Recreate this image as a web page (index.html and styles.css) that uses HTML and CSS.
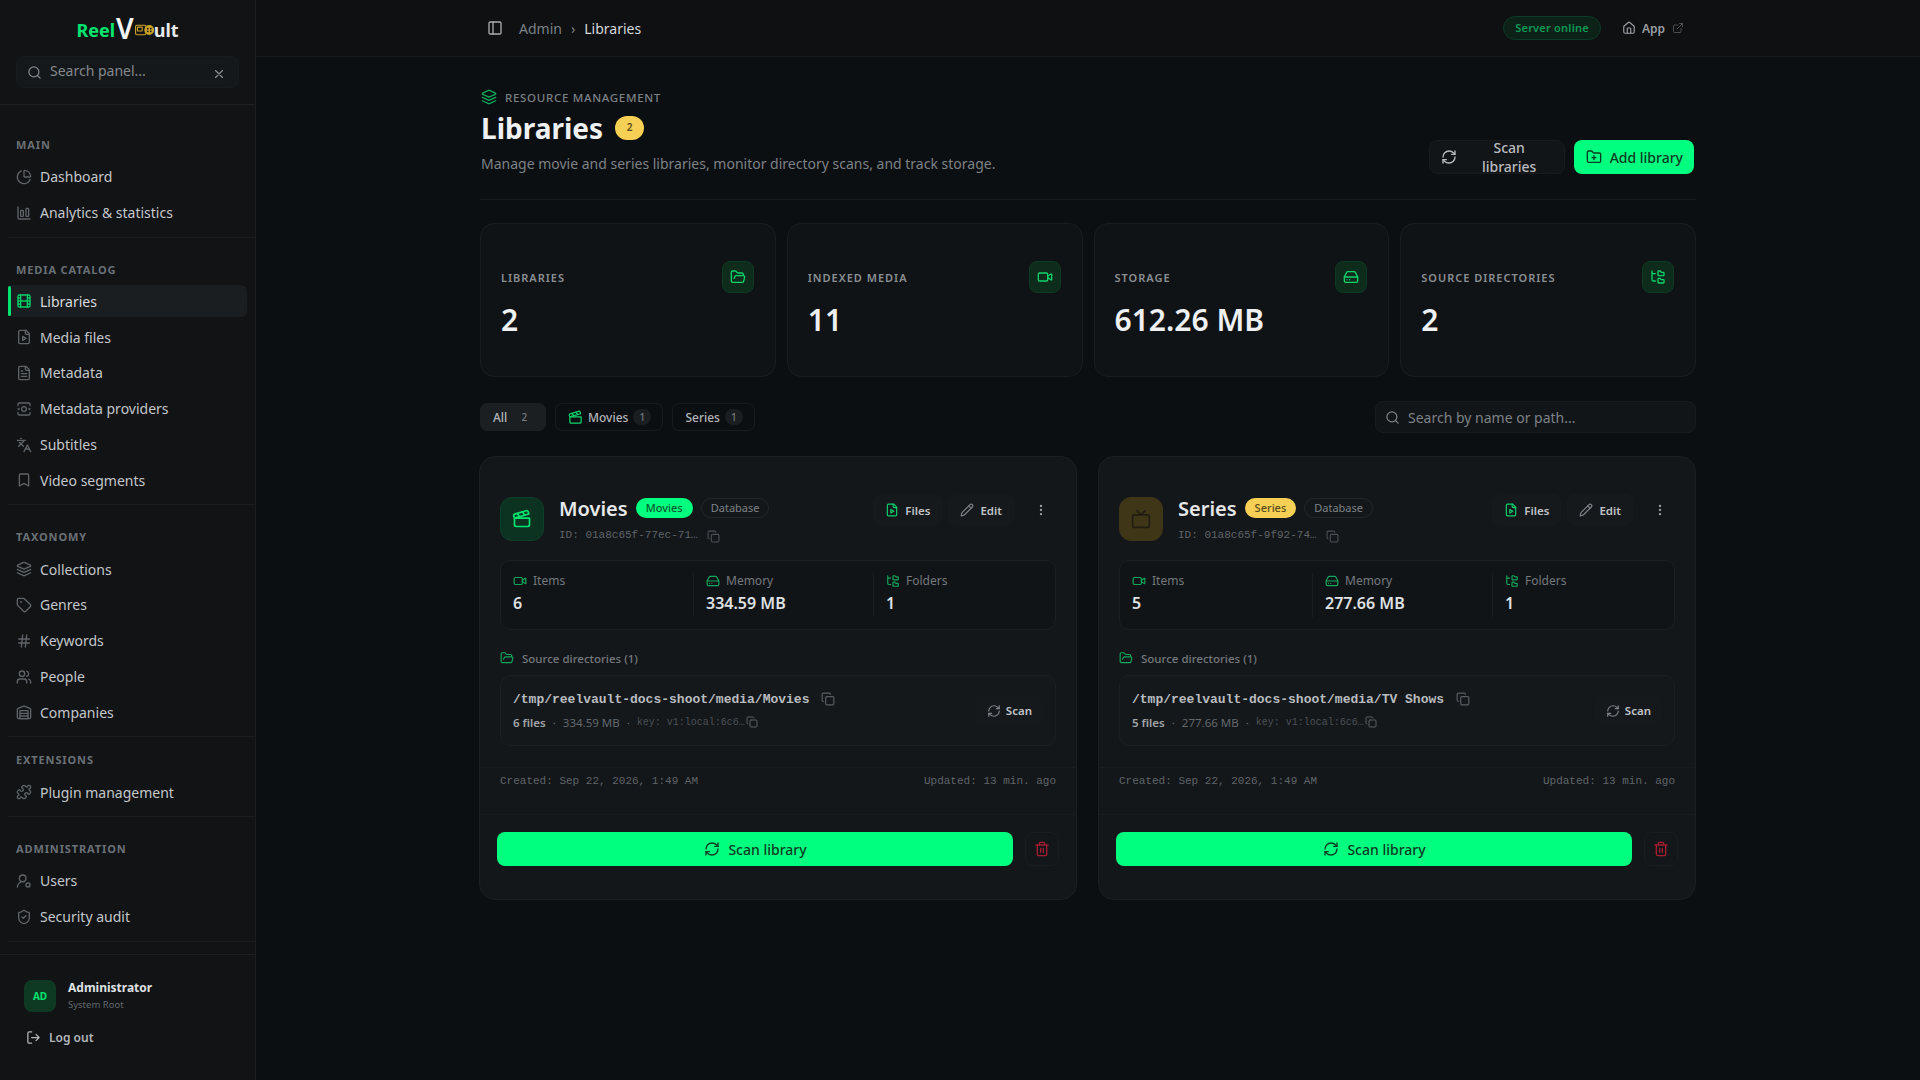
FILE: index.html
```html
<!DOCTYPE html>
<html lang="en">
<head>
<meta charset="UTF-8">
<meta name="viewport" content="width=device-width, initial-scale=1.0">
<title>Libraries - ReelVault</title>
<link rel="stylesheet" href="styles.css">
</head>
<body>
<!-- icon sprite -->
<svg class="sprite" xmlns="http://www.w3.org/2000/svg">
    <symbol id="i-search" viewBox="0 0 24 24"><circle cx="11" cy="11" r="8"/><path d="m21 21-4.3-4.3"/></symbol>
    <symbol id="i-x" viewBox="0 0 24 24"><path d="M18 6 6 18M6 6l12 12"/></symbol>
    <symbol id="i-pie" viewBox="0 0 24 24"><path d="M21 12c.552 0 1.005-.449.95-.998a10 10 0 0 0-8.953-8.951c-.55-.055-.998.398-.998.95v8a1 1 0 0 0 1 1z"/><path d="M21.21 15.89A10 10 0 1 1 8 2.83"/></symbol>
    <symbol id="i-chart" viewBox="0 0 24 24"><path d="M3 3v16a2 2 0 0 0 2 2h16"/><rect x="15" y="5" width="4" height="12" rx="1"/><rect x="7" y="8" width="4" height="9" rx="1"/></symbol>
    <symbol id="i-film" viewBox="0 0 24 24"><rect x="3" y="3" width="18" height="18" rx="2"/><path d="M7 3v18M3 7.5h4M3 12h18M3 16.5h4M17 3v18M17 7.5h4M17 16.5h4"/></symbol>
    <symbol id="i-file-play" viewBox="0 0 24 24"><path d="M15 2H6a2 2 0 0 0-2 2v16a2 2 0 0 0 2 2h12a2 2 0 0 0 2-2V7Z"/><path d="M14 2v4a2 2 0 0 0 2 2h4"/><path d="m10 11 5 3-5 3v-6z"/></symbol>
    <symbol id="i-file-text" viewBox="0 0 24 24"><path d="M15 2H6a2 2 0 0 0-2 2v16a2 2 0 0 0 2 2h12a2 2 0 0 0 2-2V7Z"/><path d="M14 2v4a2 2 0 0 0 2 2h4"/><path d="M10 9H8M16 13H8M16 17H8"/></symbol>
    <symbol id="i-scan" viewBox="0 0 24 24"><path d="M3 7V5a2 2 0 0 1 2-2h14a2 2 0 0 1 2 2v2M21 17v2a2 2 0 0 1-2 2H5a2 2 0 0 1-2-2v-2M3 12h2M19 12h2"/><circle cx="12" cy="12" r="3.5"/></symbol>
    <symbol id="i-lang" viewBox="0 0 24 24"><path d="m5 8 6 6M4 14l6-6 2-3M2 5h12M7 2h1M22 22l-5-10-5 10M14 18h6"/></symbol>
    <symbol id="i-bookmark" viewBox="0 0 24 24"><path d="m19 21-7-4-7 4V5a2 2 0 0 1 2-2h10a2 2 0 0 1 2 2v16z"/></symbol>
    <symbol id="i-layers" viewBox="0 0 24 24"><path d="m12.83 2.18a2 2 0 0 0-1.66 0L2.6 6.08a1 1 0 0 0 0 1.83l8.58 3.91a2 2 0 0 0 1.66 0l8.58-3.9a1 1 0 0 0 0-1.83Z"/><path d="m22 17.65-9.17 4.16a2 2 0 0 1-1.66 0L2 17.65"/><path d="m22 12.65-9.17 4.16a2 2 0 0 1-1.66 0L2 12.65"/></symbol>
    <symbol id="i-tag" viewBox="0 0 24 24"><path d="M12.586 2.586A2 2 0 0 0 11.172 2H4a2 2 0 0 0-2 2v7.172a2 2 0 0 0 .586 1.414l8.704 8.704a2.426 2.426 0 0 0 3.42 0l6.58-6.58a2.426 2.426 0 0 0 0-3.42z"/><circle cx="7.5" cy="7.5" r=".5"/></symbol>
    <symbol id="i-hash" viewBox="0 0 24 24"><path d="M4 9h16M4 15h16M10 3 8 21M16 3l-2 18"/></symbol>
    <symbol id="i-users" viewBox="0 0 24 24"><path d="M16 21v-2a4 4 0 0 0-4-4H6a4 4 0 0 0-4 4v2"/><circle cx="9" cy="7" r="4"/><path d="M22 21v-2a4 4 0 0 0-3-3.87M16 3.13a4 4 0 0 1 0 7.75"/></symbol>
    <symbol id="i-warehouse" viewBox="0 0 24 24"><path d="M22 8.35V20a2 2 0 0 1-2 2H4a2 2 0 0 1-2-2V8.35A2 2 0 0 1 3.26 6.5l8-3.2a2 2 0 0 1 1.48 0l8 3.2A2 2 0 0 1 22 8.35Z"/><path d="M6 18h12M6 14h12"/><rect x="6" y="10" width="12" height="12"/></symbol>
    <symbol id="i-puzzle" viewBox="0 0 24 24"><path d="M19.439 7.85c-.049.322.059.648.289.878l1.568 1.568c.47.47.706 1.087.706 1.704s-.235 1.233-.706 1.704l-1.611 1.611a.98.98 0 0 1-.837.276c-.47-.07-.802-.48-.968-.925a2.501 2.501 0 1 0-3.214 3.214c.446.166.855.497.925.968a.979.979 0 0 1-.276.837l-1.61 1.61a2.404 2.404 0 0 1-1.705.707 2.402 2.402 0 0 1-1.704-.706l-1.568-1.568a1.026 1.026 0 0 0-.877-.29c-.493.074-.84.504-1.02.968a2.5 2.5 0 1 1-3.237-3.237c.464-.18.894-.527.967-1.02a1.026 1.026 0 0 0-.289-.877l-1.568-1.568A2.402 2.402 0 0 1 1.998 12c0-.617.236-1.234.706-1.704L4.23 8.77c.24-.24.581-.353.917-.303.515.077.877.528 1.073 1.01a2.5 2.5 0 1 0 3.259-3.259c-.482-.196-.933-.558-1.01-1.073-.05-.336.062-.676.303-.917l1.525-1.525A2.402 2.402 0 0 1 12 1.998c.617 0 1.234.236 1.704.706l1.568 1.568c.23.23.556.338.877.29.493-.074.84-.504 1.02-.968a2.5 2.5 0 1 1 3.237 3.237c-.464.18-.894.527-.967 1.02Z"/></symbol>
    <symbol id="i-user-cog" viewBox="0 0 24 24"><path d="M2 21a8 8 0 0 1 10.434-7.62"/><circle cx="10" cy="8" r="5"/><circle cx="18" cy="18" r="3"/></symbol>
    <symbol id="i-shield" viewBox="0 0 24 24"><path d="M20 13c0 5-3.5 7.5-7.66 8.95a1 1 0 0 1-.67-.01C7.5 20.5 4 18 4 13V6a1 1 0 0 1 1-1c2 0 4.5-1.2 6.24-2.72a1.17 1.17 0 0 1 1.52 0C14.51 3.81 17 5 19 5a1 1 0 0 1 1 1z"/><path d="m9 12 2 2 4-4"/></symbol>
    <symbol id="i-logout" viewBox="0 0 24 24"><path d="M9 21H5a2 2 0 0 1-2-2V5a2 2 0 0 1 2-2h4M16 17l5-5-5-5M21 12H9"/></symbol>
    <symbol id="i-panel" viewBox="0 0 24 24"><rect x="3" y="3" width="18" height="18" rx="2"/><path d="M9 3v18"/></symbol>
    <symbol id="i-house" viewBox="0 0 24 24"><path d="M15 21v-8a1 1 0 0 0-1-1h-4a1 1 0 0 0-1 1v8"/><path d="M3 10a2 2 0 0 1 .709-1.528l7-5.999a2 2 0 0 1 2.582 0l7 5.999A2 2 0 0 1 21 10v9a2 2 0 0 1-2 2H5a2 2 0 0 1-2-2z"/></symbol>
    <symbol id="i-external" viewBox="0 0 24 24"><path d="M15 3h6v6M10 14 21 3M18 13v6a2 2 0 0 1-2 2H5a2 2 0 0 1-2-2V8a2 2 0 0 1 2-2h6"/></symbol>
    <symbol id="i-refresh" viewBox="0 0 24 24"><path d="M3 12a9 9 0 0 1 9-9 9.75 9.75 0 0 1 6.74 2.74L21 8"/><path d="M21 3v5h-5"/><path d="M21 12a9 9 0 0 1-9 9 9.75 9.75 0 0 1-6.74-2.74L3 16"/><path d="M8 16H3v5"/></symbol>
    <symbol id="i-folder-plus" viewBox="0 0 24 24"><path d="M12 10v6M9 13h6"/><path d="M20 20a2 2 0 0 0 2-2V8a2 2 0 0 0-2-2h-7.9a2 2 0 0 1-1.69-.9L9.6 3.9A2 2 0 0 0 7.93 3H4a2 2 0 0 0-2 2v13a2 2 0 0 0 2 2Z"/></symbol>
    <symbol id="i-folder-open" viewBox="0 0 24 24"><path d="m6 14 1.5-2.9A2 2 0 0 1 9.24 10H20a2 2 0 0 1 1.94 2.5l-1.54 6a2 2 0 0 1-1.95 1.5H4a2 2 0 0 1-2-2V5a2 2 0 0 1 2-2h3.9a2 2 0 0 1 1.69.9l.81 1.2a2 2 0 0 0 1.67.9H18a2 2 0 0 1 2 2v2"/></symbol>
    <symbol id="i-video" viewBox="0 0 24 24"><path d="m16 13 5.223 3.482a.5.5 0 0 0 .777-.416V7.87a.5.5 0 0 0-.752-.432L16 10.5"/><rect x="2" y="6" width="14" height="12" rx="2"/></symbol>
    <symbol id="i-drive" viewBox="0 0 24 24"><path d="M22 12H2"/><path d="M5.45 5.11 2 12v6a2 2 0 0 0 2 2h16a2 2 0 0 0 2-2v-6l-3.45-6.89A2 2 0 0 0 16.76 4H7.24a2 2 0 0 0-1.79 1.11z"/><path d="M6 16h.01M10 16h.01"/></symbol>
    <symbol id="i-tree" viewBox="0 0 24 24"><path d="M20 10a1 1 0 0 0 1-1V6a1 1 0 0 0-1-1h-2.5a1 1 0 0 1-.8-.4l-.9-1.2A1 1 0 0 0 15 3h-2a1 1 0 0 0-1 1v5a1 1 0 0 0 1 1Z"/><path d="M20 21a1 1 0 0 0 1-1v-3a1 1 0 0 0-1-1h-2.9a1 1 0 0 1-.88-.55l-.42-.85a1 1 0 0 0-.92-.6H13a1 1 0 0 0-1 1v5a1 1 0 0 0 1 1Z"/><path d="M3 5a2 2 0 0 0 2 2h3M3 3v13a2 2 0 0 0 2 2h3"/></symbol>
    <symbol id="i-clapper" viewBox="0 0 24 24"><path d="M20.2 6 3 11l-.9-2.4c-.3-1.1.3-2.2 1.3-2.5l13.5-4c1.1-.3 2.2.3 2.5 1.3Z"/><path d="m6.2 5.3 3.1 3.9M12.4 3.4l3.1 4"/><path d="M3 11h18v8a2 2 0 0 1-2 2H5a2 2 0 0 1-2-2Z"/></symbol>
    <symbol id="i-tv" viewBox="0 0 24 24"><rect x="2" y="7" width="20" height="15" rx="2"/><path d="m17 2-5 5-5-5"/></symbol>
    <symbol id="i-pencil" viewBox="0 0 24 24"><path d="M21.174 6.812a1 1 0 0 0-3.986-3.987L3.842 16.174a2 2 0 0 0-.5.83l-1.321 4.352a.5.5 0 0 0 .623.622l4.353-1.32a2 2 0 0 0 .83-.497z"/><path d="m15 5 4 4"/></symbol>
    <symbol id="i-copy" viewBox="0 0 24 24"><rect x="8" y="8" width="14" height="14" rx="2"/><path d="M4 16c-1.1 0-2-.9-2-2V4c0-1.1.9-2 2-2h10c1.1 0 2 .9 2 2"/></symbol>
    <symbol id="i-dots" viewBox="0 0 24 24"><circle cx="12" cy="12" r="1"/><circle cx="12" cy="5" r="1"/><circle cx="12" cy="19" r="1"/></symbol>
    <symbol id="i-trash" viewBox="0 0 24 24"><path d="M3 6h18M19 6v14c0 1-1 2-2 2H7c-1 0-2-1-2-2V6M8 6V4c0-1 1-2 2-2h4c1 0 2 1 2 2v2M10 11v6M14 11v6"/></symbol>
</svg>

<div class="app">
    <aside class="sidebar">
        <div class="sidebar-top">
            <div class="logo">
                <span class="logo-reel">Reel</span><span class="logo-v">V</span><svg class="logo-mark" viewBox="0 0 20 12"><rect x="0.6" y="1" width="11" height="10" rx="1.5"/><rect x="2.6" y="3" width="5" height="4" rx=".5"/><circle cx="15" cy="6" r="4.6" class="reel"/><circle cx="13.4" cy="4.6" r=".9" class="hole"/><circle cx="16.6" cy="4.6" r=".9" class="hole"/><circle cx="13.4" cy="7.4" r=".9" class="hole"/><circle cx="16.6" cy="7.4" r=".9" class="hole"/></svg><span class="logo-ult">ult</span>
            </div>
            <div class="side-search">
                <svg class="ic"><use href="#i-search"/></svg>
                <span>Search panel...</span>
                <svg class="ic side-search-x"><use href="#i-x"/></svg>
            </div>
        </div>
        <nav class="side-nav">
            <div class="nav-group first">
                <div class="nav-label">Main</div>
                <a class="nav-item"><svg class="ic"><use href="#i-pie"/></svg>Dashboard</a>
                <a class="nav-item"><svg class="ic"><use href="#i-chart"/></svg>Analytics &amp; statistics</a>
            </div>
            <div class="nav-group">
                <div class="nav-label">Media catalog</div>
                <a class="nav-item active"><svg class="ic"><use href="#i-film"/></svg>Libraries</a>
                <a class="nav-item"><svg class="ic"><use href="#i-file-play"/></svg>Media files</a>
                <a class="nav-item"><svg class="ic"><use href="#i-file-text"/></svg>Metadata</a>
                <a class="nav-item"><svg class="ic"><use href="#i-scan"/></svg>Metadata providers</a>
                <a class="nav-item"><svg class="ic"><use href="#i-lang"/></svg>Subtitles</a>
                <a class="nav-item"><svg class="ic"><use href="#i-bookmark"/></svg>Video segments</a>
            </div>
            <div class="nav-group">
                <div class="nav-label">Taxonomy</div>
                <a class="nav-item"><svg class="ic"><use href="#i-layers"/></svg>Collections</a>
                <a class="nav-item"><svg class="ic"><use href="#i-tag"/></svg>Genres</a>
                <a class="nav-item"><svg class="ic"><use href="#i-hash"/></svg>Keywords</a>
                <a class="nav-item"><svg class="ic"><use href="#i-users"/></svg>People</a>
                <a class="nav-item"><svg class="ic"><use href="#i-warehouse"/></svg>Companies</a>
            </div>
            <div class="nav-group tight">
                <div class="nav-label">Extensions</div>
                <a class="nav-item"><svg class="ic"><use href="#i-puzzle"/></svg>Plugin management</a>
            </div>
            <div class="nav-group">
                <div class="nav-label">Administration</div>
                <a class="nav-item"><svg class="ic"><use href="#i-user-cog"/></svg>Users</a>
                <a class="nav-item"><svg class="ic"><use href="#i-shield"/></svg>Security audit</a>
            </div>
        </nav>
        <div class="side-foot">
            <div class="user-row">
                <div class="avatar">AD</div>
                <div>
                    <div class="user-name">Administrator</div>
                    <div class="user-role">System Root</div>
                </div>
            </div>
            <a class="logout"><svg class="ic"><use href="#i-logout"/></svg>Log out</a>
        </div>
    </aside>

    <div class="main">
        <header class="topbar">
            <div class="topbar-inner">
                <svg class="ic panel-ic"><use href="#i-panel"/></svg>
                <span class="crumb">Admin</span>
                <span class="crumb-sep">&rsaquo;</span>
                <span class="crumb-now">Libraries</span>
                <span class="status-pill">Server online</span>
                <a class="app-link"><svg class="ic"><use href="#i-house"/></svg>App<svg class="ic ext"><use href="#i-external"/></svg></a>
            </div>
        </header>

        <main class="content">
            <section class="page-head">
                <div>
                    <div class="eyebrow"><svg class="ic"><use href="#i-layers"/></svg>Resource management</div>
                    <div class="title-row">
                        <h1>Libraries</h1>
                        <span class="count-badge">2</span>
                    </div>
                    <p class="page-desc">Manage movie and series libraries, monitor directory scans, and track storage.</p>
                </div>
                <div class="head-actions">
                    <button class="btn btn-ghost"><svg class="ic"><use href="#i-refresh"/></svg>Scan libraries</button>
                    <button class="btn btn-primary"><svg class="ic"><use href="#i-folder-plus"/></svg>Add library</button>
                </div>
            </section>

            <section class="stats">
                <div class="stat-card">
                    <div class="stat-top"><span class="stat-label">Libraries</span><span class="stat-icon"><svg class="ic"><use href="#i-folder-open"/></svg></span></div>
                    <div class="stat-value">2</div>
                </div>
                <div class="stat-card">
                    <div class="stat-top"><span class="stat-label">Indexed media</span><span class="stat-icon"><svg class="ic"><use href="#i-video"/></svg></span></div>
                    <div class="stat-value">11</div>
                </div>
                <div class="stat-card">
                    <div class="stat-top"><span class="stat-label">Storage</span><span class="stat-icon"><svg class="ic"><use href="#i-drive"/></svg></span></div>
                    <div class="stat-value">612.26 MB</div>
                </div>
                <div class="stat-card">
                    <div class="stat-top"><span class="stat-label">Source directories</span><span class="stat-icon"><svg class="ic"><use href="#i-tree"/></svg></span></div>
                    <div class="stat-value">2</div>
                </div>
            </section>

            <section class="filters">
                <button class="chip chip-on">All <span class="chip-n">2</span></button>
                <button class="chip"><svg class="ic"><use href="#i-clapper"/></svg>Movies <span class="chip-n">1</span></button>
                <button class="chip">Series <span class="chip-n">1</span></button>
                <div class="lib-search"><svg class="ic"><use href="#i-search"/></svg>Search by name or path...</div>
            </section>

            <section class="lib-grid">
                <article class="lib-card">
                    <div class="lib-body">
                        <div class="lib-head">
                            <div class="lib-icon"><svg class="ic"><use href="#i-clapper"/></svg></div>
                            <div class="lib-title">
                                <div class="lib-name-row"><h2>Movies</h2><span class="tag tag-green">Movies</span><span class="tag tag-line">Database</span></div>
                                <div class="lib-id">ID: 01a8c65f-77ec-71…<svg class="ic"><use href="#i-copy"/></svg></div>
                            </div>
                            <div class="lib-btns">
                                <button class="mini"><svg class="ic green"><use href="#i-file-play"/></svg>Files</button>
                                <button class="mini"><svg class="ic"><use href="#i-pencil"/></svg>Edit</button>
                                <svg class="ic dots"><use href="#i-dots"/></svg>
                            </div>
                        </div>
                        <div class="lib-stats">
                            <div class="lib-stat"><div class="lib-stat-k"><svg class="ic"><use href="#i-video"/></svg>Items</div><div class="lib-stat-v">6</div></div>
                            <div class="lib-stat"><div class="lib-stat-k"><svg class="ic"><use href="#i-drive"/></svg>Memory</div><div class="lib-stat-v">334.59 MB</div></div>
                            <div class="lib-stat"><div class="lib-stat-k"><svg class="ic"><use href="#i-tree"/></svg>Folders</div><div class="lib-stat-v">1</div></div>
                        </div>
                        <div class="src-title"><svg class="ic"><use href="#i-folder-open"/></svg>Source directories (1)</div>
                        <div class="src-box">
                            <div>
                                <div class="src-path">/tmp/reelvault-docs-shoot/media/Movies<svg class="ic"><use href="#i-copy"/></svg></div>
                                <div class="src-meta"><b>6 files</b><i>·</i>334.59 MB<i>·</i><span class="src-key">key: v1:local:6c6…</span><svg class="ic"><use href="#i-copy"/></svg></div>
                            </div>
                            <button class="mini mini-scan"><svg class="ic"><use href="#i-refresh"/></svg>Scan</button>
                        </div>
                    </div>
                    <div class="lib-dates"><span>Created: Sep 22, 2026, 1:49 AM</span><span>Updated: 13 min. ago</span></div>
                    <div class="lib-actions">
                        <button class="btn btn-primary btn-wide"><svg class="ic"><use href="#i-refresh"/></svg>Scan library</button>
                        <button class="trash"><svg class="ic"><use href="#i-trash"/></svg></button>
                    </div>
                </article>

                <article class="lib-card">
                    <div class="lib-body">
                        <div class="lib-head">
                            <div class="lib-icon yellow"><svg class="ic"><use href="#i-tv"/></svg></div>
                            <div class="lib-title">
                                <div class="lib-name-row"><h2>Series</h2><span class="tag tag-yellow">Series</span><span class="tag tag-line">Database</span></div>
                                <div class="lib-id">ID: 01a8c65f-9f92-74…<svg class="ic"><use href="#i-copy"/></svg></div>
                            </div>
                            <div class="lib-btns">
                                <button class="mini"><svg class="ic green"><use href="#i-file-play"/></svg>Files</button>
                                <button class="mini"><svg class="ic"><use href="#i-pencil"/></svg>Edit</button>
                                <svg class="ic dots"><use href="#i-dots"/></svg>
                            </div>
                        </div>
                        <div class="lib-stats">
                            <div class="lib-stat"><div class="lib-stat-k"><svg class="ic"><use href="#i-video"/></svg>Items</div><div class="lib-stat-v">5</div></div>
                            <div class="lib-stat"><div class="lib-stat-k"><svg class="ic"><use href="#i-drive"/></svg>Memory</div><div class="lib-stat-v">277.66 MB</div></div>
                            <div class="lib-stat"><div class="lib-stat-k"><svg class="ic"><use href="#i-tree"/></svg>Folders</div><div class="lib-stat-v">1</div></div>
                        </div>
                        <div class="src-title"><svg class="ic"><use href="#i-folder-open"/></svg>Source directories (1)</div>
                        <div class="src-box">
                            <div>
                                <div class="src-path">/tmp/reelvault-docs-shoot/media/TV Shows<svg class="ic"><use href="#i-copy"/></svg></div>
                                <div class="src-meta"><b>5 files</b><i>·</i>277.66 MB<i>·</i><span class="src-key">key: v1:local:6c6…</span><svg class="ic"><use href="#i-copy"/></svg></div>
                            </div>
                            <button class="mini mini-scan"><svg class="ic"><use href="#i-refresh"/></svg>Scan</button>
                        </div>
                    </div>
                    <div class="lib-dates"><span>Created: Sep 22, 2026, 1:49 AM</span><span>Updated: 13 min. ago</span></div>
                    <div class="lib-actions">
                        <button class="btn btn-primary btn-wide"><svg class="ic"><use href="#i-refresh"/></svg>Scan library</button>
                        <button class="trash"><svg class="ic"><use href="#i-trash"/></svg></button>
                    </div>
                </article>
            </section>
        </main>
    </div>
</div>
</body>
</html>
```

FILE: styles.css
```css
* {
    box-sizing: border-box;
}
body {
    margin: 0;
    height: 100vh;
    overflow: hidden;
    background-color: #0c0f11;
    color: #e6e8ea;
    font-family: "Noto Sans", "Liberation Sans", sans-serif;
    font-size: 14px;
}
h1, h2, p {
    margin: 0;
}
button {
    font-family: inherit;
    cursor: pointer;
}
.sprite {
    display: none;
}
.ic {
    width: 16px;
    height: 16px;
    flex: none;
    fill: none;
    stroke: currentColor;
    stroke-width: 2;
    stroke-linecap: round;
    stroke-linejoin: round;
}
.app {
    display: flex;
    height: 100vh;
}

/* sidebar */
.sidebar {
    width: 256px;
    flex: none;
    display: flex;
    flex-direction: column;
    background-color: #111315;
    border-right: 1px solid #1c1f22;
}
.sidebar-top {
    height: 105px;
    padding: 16px 16px 0;
    border-bottom: 1px solid #1d2023;
}
.logo {
    display: flex;
    justify-content: center;
    align-items: center;
    height: 28px;
    font-size: 18px;
    font-weight: 700;
    line-height: 1;
}
.logo-reel {
    color: #00e56f;
}
.logo-v {
    color: #f2f4f5;
    font-size: 28px;
    font-weight: 600;
    margin: -4px 1px 0;
}
.logo-ult {
    color: #e6e8ea;
}
.logo-mark {
    width: 19px;
    height: 12px;
    fill: none;
    stroke: #c9a227;
    stroke-width: 1.2;
}
.logo-mark .reel {
    fill: #c9a227;
}
.logo-mark .hole {
    fill: #111315;
    stroke: none;
}
.side-search {
    display: flex;
    align-items: center;
    gap: 8px;
    height: 32px;
    margin-top: 12px;
    padding: 0 12px 0 10px;
    background-color: #15181a;
    border: 1px solid #181b1e;
    border-radius: 8px;
    color: #83888d;
}
.side-search .ic {
    width: 15px;
    height: 15px;
}
.side-search span {
    margin-top: -4px;
}
.side-search .side-search-x {
    margin: 4px 0 0 auto;
    width: 14px;
    height: 14px;
    color: #8d9296;
}
.side-nav {
    padding-top: 8px;
}
.nav-group {
    padding: 24px 0 8px;
    margin-left: 8px;
    display: flex;
    flex-direction: column;
    gap: 3.8px;
    border-bottom: 1px solid #1a1d20;
}
.nav-group.first {
    padding-top: 24px;
}
.nav-group.tight {
    padding-top: 15px;
}
.nav-label {
    height: 16px;
    line-height: 16px;
    padding-left: 8px;
    margin-bottom: 4px;
    font-size: 11px;
    font-weight: 700;
    letter-spacing: .08em;
    text-transform: uppercase;
    color: #6b7075;
}
.nav-item {
    display: flex;
    align-items: center;
    gap: 8px;
    height: 32px;
    padding-left: 8px;
    margin-right: 8px;
    color: #c4c7ca;
    border-radius: 6px;
}
.nav-item .ic {
    color: #5f6468;
}
.nav-item.active {
    position: relative;
    background-color: #1a1e21;
    color: #d9dbdd;
}
.nav-item.active::before {
    content: "";
    position: absolute;
    left: 0;
    top: 1px;
    bottom: 1px;
    width: 3px;
    border-radius: 2px;
    background-color: #00e56f;
}
.nav-item.active .ic {
    color: #00d166;
}
.side-foot {
    margin-top: 12px;
    border-top: 1px solid #1d2023;
    padding: 25px 24px 0;
}
.user-row {
    display: flex;
    align-items: center;
    gap: 12px;
}
.avatar {
    width: 32px;
    height: 32px;
    display: flex;
    align-items: center;
    justify-content: center;
    border-radius: 8px;
    background-color: #0e3a24;
    color: #00e56f;
    font-size: 10px;
    font-weight: 700;
}
.user-name {
    font-size: 12px;
    font-weight: 700;
    line-height: 16px;
    color: #dfe1e3;
}
.user-role {
    font-size: 9.5px;
    line-height: 14px;
    margin-top: 2px;
    color: #63686c;
}
.logout {
    display: flex;
    align-items: center;
    gap: 8px;
    margin: 17px 0 0 2px;
    font-size: 12px;
    font-weight: 600;
    color: #b3b6b9;
}
.logout .ic {
    width: 15px;
    height: 15px;
}

/* topbar */
.main {
    flex: 1;
    min-width: 0;
}
.topbar {
    height: 57px;
    border-bottom: 1px solid #191c1e;
    background-color: #0e1012;
}
.topbar-inner {
    width: 1216px;
    height: 56px;
    margin: 0 auto;
    padding: 0 12px 0 7px;
    display: flex;
    align-items: center;
    font-size: 14px;
}
.panel-ic {
    color: #a9adb0;
    margin-right: 16px;
}
.crumb {
    color: #7b8085;
}
.crumb-sep {
    color: #7b8085;
    margin: 0 9px;
}
.crumb-now {
    color: #d5d7d9;
}
.status-pill {
    margin-left: auto;
    height: 24px;
    line-height: 22px;
    padding: 0 11px;
    border-radius: 12px;
    border: 1px solid #0c3b25;
    background-color: #0c2218;
    color: #0c9a56;
    font-size: 11px;
    font-weight: 600;
    letter-spacing: .02em;
}
.app-link {
    display: flex;
    align-items: center;
    margin-left: 21px;
    font-size: 12px;
    font-weight: 600;
    color: #9a9ea2;
}
.app-link .ic {
    width: 14px;
    height: 14px;
    margin-right: 6px;
}
.app-link .ext {
    width: 12px;
    height: 12px;
    margin: 0 0 0 7px;
    color: #4c5054;
}

/* page */
.content {
    width: 1216px;
    margin: 0 auto;
    padding-top: 31px;
}
.page-head {
    display: flex;
    justify-content: space-between;
    align-items: flex-end;
    height: 112px;
    padding: 0 2px 25px 1px;
    border-bottom: 1px solid #17191b;
}
.eyebrow {
    display: flex;
    align-items: center;
    gap: 8px;
    height: 16px;
    font-size: 11.5px;
    font-weight: 500;
    letter-spacing: .06em;
    text-transform: uppercase;
    color: #7b8085;
}
.eyebrow .ic {
    color: #0fa85c;
}
.title-row {
    display: flex;
    align-items: center;
    gap: 12px;
    margin-top: 4px;
}
h1 {
    font-size: 28px;
    font-weight: 700;
    line-height: 38px;
    color: #eef0f2;
}
.count-badge {
    width: 29px;
    height: 24px;
    border-radius: 12px;
    background-color: #f6cf55;
    color: #5c4d1a;
    font-size: 10px;
    font-weight: 600;
    text-align: center;
    line-height: 22px;
}
.page-desc {
    margin-top: 7px;
    line-height: 20px;
    color: #7d8286;
}
.head-actions {
    display: flex;
    gap: 9px;
}
.btn {
    display: flex;
    align-items: center;
    justify-content: center;
    gap: 8px;
    height: 34px;
    padding: 0 10px 0 11px;
    border-radius: 8px;
    font-size: 14px;
    font-weight: 500;
    border: 1px solid transparent;
}
.btn-ghost {
    width: 136px;
    background-color: #121517;
    border-color: #191c1f;
    color: #b9bcbf;
}
.btn-primary {
    background-color: #00ff7f;
    color: #0b3a22;
}

/* stat cards */
.stats {
    display: grid;
    grid-template-columns: repeat(4, 1fr);
    gap: 11px;
    margin-top: 23px;
}
.stat-card {
    height: 154px;
    padding: 37px 21px 0 20px;
    background-color: #101315;
    border: 1px solid #1a1d20;
    border-radius: 14px;
}
.stat-top {
    display: flex;
    justify-content: space-between;
    align-items: center;
}
.stat-label {
    font-size: 11px;
    font-weight: 600;
    letter-spacing: .09em;
    text-transform: uppercase;
    color: #8a8f93;
}
.stat-icon {
    width: 32px;
    height: 32px;
    display: flex;
    align-items: center;
    justify-content: center;
    border-radius: 8px;
    background-color: #0d2c1c;
    border: 1px solid #0e3a24;
    color: #0ed36b;
}
.stat-value {
    margin-top: 7px;
    font-size: 30px;
    line-height: 40px;
    font-weight: 600;
    color: #eef0f2;
}

/* filters */
.filters {
    display: flex;
    align-items: center;
    gap: 9px;
    margin-top: 24px;
    height: 32px;
}
.chip {
    display: flex;
    align-items: center;
    gap: 5px;
    height: 28px;
    padding: 0 11px 0 12px;
    background: none;
    border: 1px solid #191c1f;
    border-radius: 7px;
    color: #b3b6b9;
    font-size: 12px;
    font-weight: 500;
}
.chip .ic {
    width: 15px;
    height: 15px;
    color: #0ed36b;
}
.chip-on {
    width: 66px;
    background-color: #1b1f22;
    border-color: #1b1f22;
}
.chip-n {
    min-width: 18px;
    height: 16px;
    line-height: 16px;
    border-radius: 8px;
    font-size: 10px;
    text-align: center;
    color: #75797d;
    background-color: #1b1e21;
}
.chip-on .chip-n {
    background: none;
    margin-left: 3px;
}
.lib-search {
    margin-left: auto;
    width: 321px;
    height: 32px;
    display: flex;
    align-items: center;
    gap: 8px;
    padding: 0 9px;
    background-color: #121517;
    border: 1px solid #191c1f;
    border-radius: 8px;
    color: #7d8286;
}
.lib-search .ic {
    width: 15px;
    height: 15px;
}

/* library cards */
.lib-grid {
    display: grid;
    grid-template-columns: 1fr 1fr;
    gap: 21px;
    margin: 23px 0 0 -1px;
}
.lib-card {
    height: 444px;
    display: flex;
    flex-direction: column;
    background-color: #14171a;
    border: 1px solid #1c1f22;
    border-radius: 16px;
}
.lib-body {
    height: 310px;
    padding: 36px 20px 0;
}
.lib-head {
    display: flex;
    align-items: flex-start;
    height: 67px;
}
.lib-icon {
    width: 44px;
    height: 44px;
    margin-top: 4px;
    display: flex;
    align-items: center;
    justify-content: center;
    border-radius: 12px;
    background-color: #0c3322;
    border: 1px solid #0e3f29;
    color: #00e56f;
}
.lib-icon .ic {
    width: 20px;
    height: 20px;
}
.lib-icon.yellow {
    background-color: #3f3618;
    border-color: #3f3618;
    color: #211d10;
}
.lib-title {
    margin-left: 15px;
}
.lib-name-row {
    display: flex;
    align-items: center;
    height: 30px;
}
h2 {
    font-size: 20px;
    font-weight: 600;
    color: #e6e8ea;
    margin-right: 8px;
}
.tag {
    height: 20px;
    line-height: 18px;
    padding: 0 9px;
    border-radius: 10px;
    font-size: 11px;
    font-weight: 500;
    border: 1px solid transparent;
}
.tag-green {
    background-color: #00ff7f;
    color: #0b5a32;
    margin-right: 8px;
}
.tag-yellow {
    background-color: #f6cf55;
    color: #5c4d1a;
    margin-right: 8px;
}
.tag-line {
    border-color: #23272a;
    color: #7d8286;
    font-weight: 400;
}
.lib-id {
    display: flex;
    align-items: center;
    margin-top: 4px;
    font-family: "Liberation Mono", monospace;
    font-size: 11px;
    color: #5f6468;
}
.lib-id .ic {
    width: 13px;
    height: 13px;
    margin: 3px 0 0 9px;
    color: #4c5054;
}
.lib-btns {
    margin-left: auto;
    display: flex;
    align-items: center;
    gap: 6px;
    margin-top: 1px;
    margin-right: 8px;
}
.mini {
    display: flex;
    align-items: center;
    gap: 6px;
    height: 32px;
    padding: 0 11px;
    background-color: #15191c;
    border: 1px solid #171a1d;
    border-radius: 8px;
    color: #c0c3c6;
    font-size: 11.5px;
    font-weight: 600;
}
.mini .ic {
    width: 14px;
    height: 14px;
    color: #7d8286;
}
.mini .ic.green {
    color: #0ed36b;
}
.dots {
    margin-left: 14px;
    width: 14px;
    height: 14px;
    color: #9a9ea2;
}
.lib-stats {
    display: grid;
    grid-template-columns: 193px 180px 1fr;
    height: 70px;
    background-color: #111417;
    border: 1px solid #1b1f22;
    border-radius: 10px;
    padding: 12px 0;
}
.lib-stat {
    padding-left: 12px;
    border-right: 1px solid #1a1d20;
}
.lib-stat:last-child {
    border-right: none;
}
.lib-stat-k {
    display: flex;
    align-items: center;
    gap: 6px;
    font-size: 12px;
    line-height: 16px;
    color: #74797d;
}
.lib-stat-k .ic {
    width: 14px;
    height: 14px;
    color: #0fa85c;
}
.lib-stat-v {
    margin-top: 3px;
    font-size: 16px;
    line-height: 22px;
    font-weight: 600;
    color: #dfe1e3;
}
.src-title {
    display: flex;
    align-items: center;
    gap: 8px;
    height: 16px;
    margin-top: 20px;
    font-size: 11.5px;
    font-weight: 500;
    color: #74797d;
}
.src-title .ic {
    width: 14px;
    height: 14px;
    color: #0fa85c;
}
.src-box {
    display: flex;
    justify-content: space-between;
    align-items: center;
    height: 71px;
    margin-top: 9px;
    padding: 0 12px;
    border: 1px solid #1b1f22;
    border-radius: 10px;
    background-color: #14181b;
}
.src-path {
    display: flex;
    align-items: center;
    font-family: "Liberation Mono", monospace;
    font-size: 13px;
    font-weight: 700;
    color: #b9bcbf;
}
.src-path .ic {
    width: 14px;
    height: 14px;
    margin-left: 12px;
    color: #5a5e62;
}
.src-meta {
    display: flex;
    align-items: center;
    margin-top: 8px;
    font-size: 11.5px;
    color: #63686c;
}
.src-meta b {
    color: #a3a6a9;
    font-weight: 600;
}
.src-meta i {
    font-style: normal;
    margin: 0 7px;
}
.src-key {
    font-family: "Liberation Mono", monospace;
    font-size: 10px;
    color: #4c5054;
}
.src-meta .ic {
    width: 12px;
    height: 12px;
    margin-left: 1px;
    color: #5a5e62;
}
.mini-scan {
    height: 29px;
    padding: 0 10px;
    gap: 5px;
}
.lib-dates {
    display: flex;
    justify-content: space-between;
    height: 48px;
    padding: 7px 20px 0;
    border-top: 1px solid #191c1f;
    border-bottom: 1px solid #191c1f;
    font-family: "Liberation Mono", monospace;
    font-size: 11px;
    color: #5f6468;
}
.lib-actions {
    display: flex;
    align-items: center;
    gap: 12px;
    padding: 17px 17px 0;
}
.btn-wide {
    flex: 1;
}
.trash {
    width: 34px;
    height: 34px;
    display: flex;
    align-items: center;
    justify-content: center;
    background: none;
    border: 1px solid #1a1d20;
    border-radius: 8px;
    color: #a51c30;
}
```
